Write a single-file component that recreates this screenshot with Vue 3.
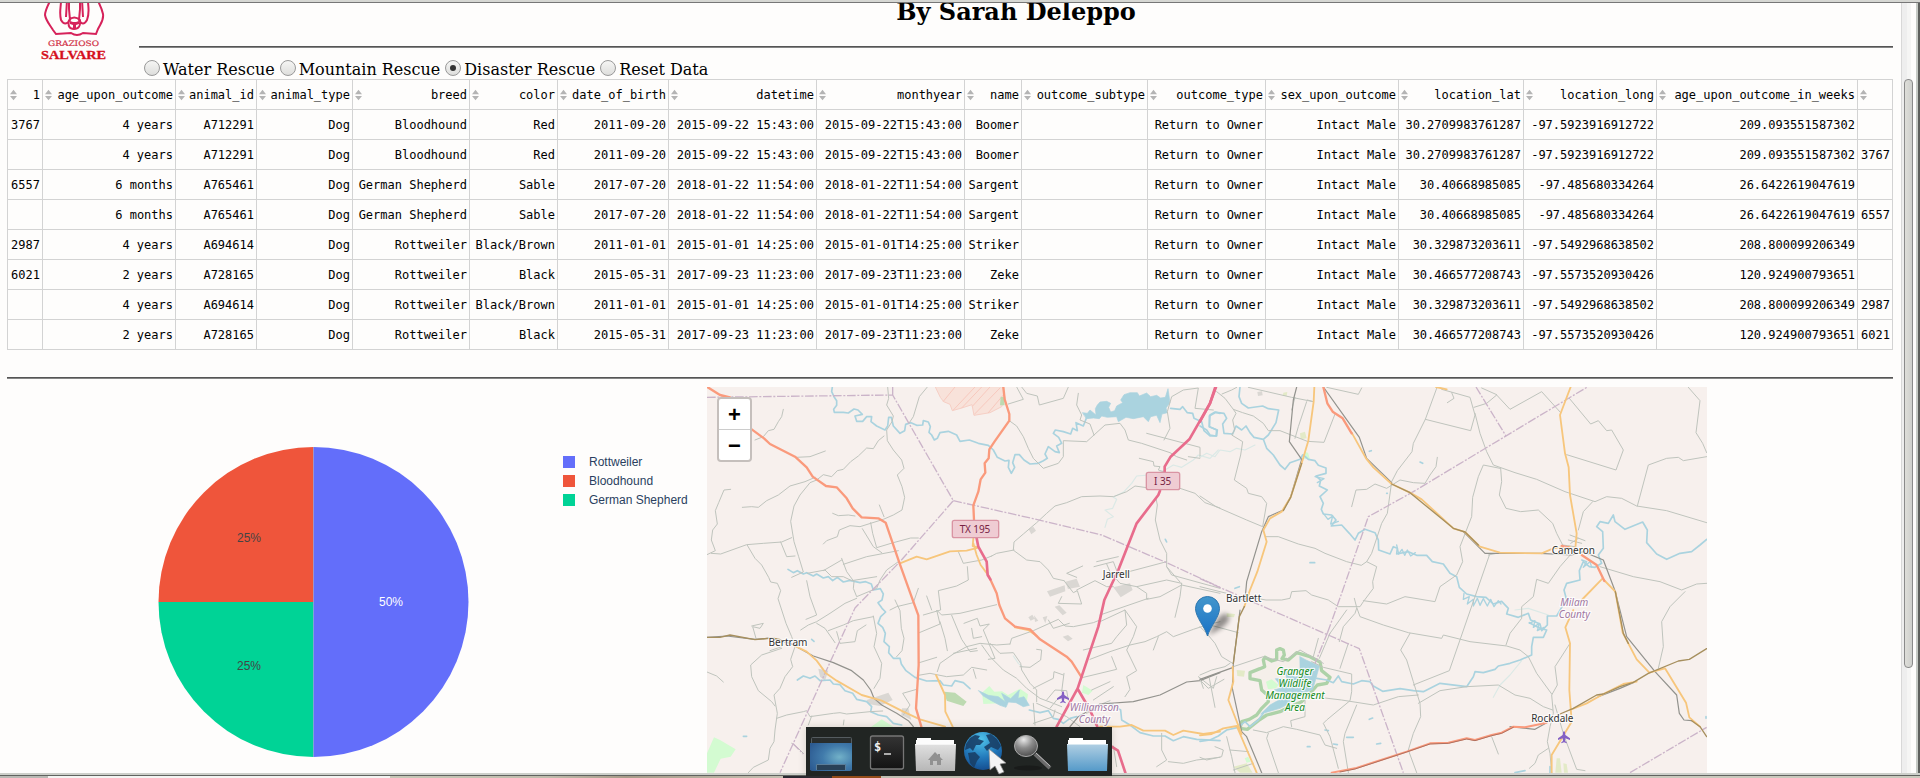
<script setup>
const columns = [
  ['1', 35], ['age_upon_outcome', 133], ['animal_id', 81], ['animal_type', 96], ['breed', 117],
  ['color', 88], ['date_of_birth', 111], ['datetime', 148], ['monthyear', 148], ['name', 57],
  ['outcome_subtype', 126], ['outcome_type', 118], ['sex_upon_outcome', 133], ['location_lat', 125],
  ['location_long', 133], ['age_upon_outcome_in_weeks', 201], ['', 35],
]

const dogs = {
  3767: ['4 years', 'A712291', 'Dog', 'Bloodhound', 'Red', '2011-09-20', '2015-09-22 15:43:00', '2015-09-22T15:43:00', 'Boomer', '', 'Return to Owner', 'Intact Male', '30.2709983761287', '-97.5923916912722', '209.093551587302'],
  6557: ['6 months', 'A765461', 'Dog', 'German Shepherd', 'Sable', '2017-07-20', '2018-01-22 11:54:00', '2018-01-22T11:54:00', 'Sargent', '', 'Return to Owner', 'Intact Male', '30.40668985085', '-97.485680334264', '26.6422619047619'],
  2987: ['4 years', 'A694614', 'Dog', 'Rottweiler', 'Black/Brown', '2011-01-01', '2015-01-01 14:25:00', '2015-01-01T14:25:00', 'Striker', '', 'Return to Owner', 'Intact Male', '30.329873203611', '-97.5492968638502', '208.800099206349'],
  6021: ['2 years', 'A728165', 'Dog', 'Rottweiler', 'Black', '2015-05-31', '2017-09-23 11:23:00', '2017-09-23T11:23:00', 'Zeke', '', 'Return to Owner', 'Intact Male', '30.466577208743', '-97.5573520930426', '120.924900793651'],
}
const first = (id) => [id, ...dogs[id], '']
const last = (id) => ['', ...dogs[id], id]
const rows = [first(3767), last(3767), first(6557), last(6557), first(2987), first(6021), last(2987), last(6021)]

const filters = ['Water Rescue', 'Mountain Rescue', 'Disaster Rescue', 'Reset Data']
const selected = 'Disaster Rescue'

const legend = [
  { name: 'Rottweiler', tone: 'blue' },
  { name: 'Bloodhound', tone: 'red' },
  { name: 'German Shepherd', tone: 'green' },
]

/* Map geometry: three units per pixel, west half and east half. */
const west = [
  ['area-mil', 'M706 21L721 52L731 65L750 73L757 92L785 84L816 74L822 106L870 98L905 80L915 55L908 21Z'],
  ['hatch', 'M730 64L765 21M760 90L825 21M785 84L845 21M818 78L870 21M824 102L900 24M865 98L910 45'],
  ['wood', 'M902 50L912 52L914 76L900 76ZM733 935L765 938L800 965L790 978L740 962Z'],
  ['park', 'M42 1072L60 1080L107 1108L92 1130L62 1136L42 1178H21V1120ZM846 938L868 918L883 935L906 934L924 945L960 926L984 943L978 978L940 962L900 970L850 972ZM512 1042L545 1018L580 1040ZM1150 915L1178 932L1165 945L1146 938Z'],
  ['town', 'M986 448L1000 440L1008 452L994 463ZM1041 634L1094 616L1096 634L1050 650ZM1096 605L1130 596L1140 620L1104 627ZM1240 622L1290 610L1298 630L1262 652ZM1064 680L1078 676L1100 698L1088 706ZM1002 706L1015 722L1005 726ZM985 712L997 704L1004 716L992 722ZM1028 712L1042 708L1036 730ZM1088 770L1104 765L1118 776L1104 784ZM355 866L385 872L375 902L360 890ZM500 960L565 938L578 960L540 978L505 972ZM606 985L625 985L634 1020L604 1005Z'],
  ['lake', 'M1148 98L1162 100L1170 90L1188 105L1186 86L1192 75L1200 66L1220 64L1232 70L1226 82L1232 96L1244 92L1250 78L1268 68L1262 60L1272 44L1290 38L1312 38L1318 48L1340 39L1352 50L1370 46L1382 54L1396 52L1404 26L1410 68L1398 84L1402 98L1386 102L1380 128L1370 106L1352 110L1345 125L1330 110L1300 116L1278 112L1255 125L1250 110L1222 112L1205 108L1198 116L1180 114L1160 116Z'],
  ['lake', 'M836 932L865 946L895 950L916 966L905 940L932 956L958 930L954 955L972 950L988 976L970 980L948 968L925 966L918 982L900 976L874 962L850 948Z'],
  ['stream', 'M1215 442L1222 418L1240 410L1215 390L1238 385L1250 358L1240 352L1272 335L1295 310L1310 288L1360 284L1395 270L1420 255L1445 262L1480 240L1495 225L1530 235L1555 210M940 828L955 850L966 860'],
  ['river', 'M397 21L395 35L402 50L410 62L410 76L401 88L403 97L430 97L445 99L462 87L474 90L487 103L465 108L470 124L488 124L500 110L515 110L513 125L530 138L555 150L563 138L566 112L574 112L580 138L600 160L614 152L617 133L633 128L650 136L668 135L670 122L685 126L691 140L687 157L695 165L703 180L712 175L720 158L745 154L770 165L780 184L808 180L835 190L865 196L880 210L892 232L915 243L927 241L925 262L934 280L944 262L938 248L945 224L958 224L972 240L990 252L1015 250L1030 242L1042 235L1035 222L1045 200L1065 215L1078 218L1070 198L1085 190L1076 172L1060 160L1066 150L1090 155L1112 162L1118 145L1132 152L1128 128L1150 138L1160 112'],
  ['river', 'M1412 85L1440 88L1448 80L1462 98L1478 100L1482 115L1505 125L1512 152L1530 168L1550 168L1552 150L1528 140L1530 105L1545 96L1560 100'],
  ['river', 'M264 568L280 578L292 572L310 582L320 578L340 588L350 582L370 594L385 590L398 602L412 592L430 606L450 601L480 608L497 605L514 612L520 630L541 626L550 642L546 660L534 668L546 685L557 696L542 710L534 730L548 742L556 760L552 785L568 800L566 818L580 835L600 835L604 852L618 872L645 892L680 903L720 902L730 915L755 918L765 902L790 908L810 926'],
  ['river', 'M292 900L310 888L330 895L345 888L360 902L390 900L400 912L420 914L435 932L458 940L470 958L500 965L515 980L512 995L535 1005L560 1010L580 1030L605 1035'],
  ['river', 'M988 990L1020 998L1045 992L1060 1015L1075 1018L1090 1030L1110 1015L1130 1010M1230 970L1262 990L1265 1020L1290 1035L1320 1058L1360 1068L1395 1068L1420 1082L1450 1070L1490 1078L1560 1082M130 1069H140M335 778L342 784M1396 478L1400 486'],
  ['road', 'M682 21L658 50L640 110L628 128M250 88L245 110L235 125L222 148L205 152L190 170L165 180M563 21L566 55L560 75L580 108L576 125L560 150L562 182L580 210L605 240L612 265L592 285L606 320L614 352L606 390L580 405L550 418L480 440L450 437L418 450L412 470L380 482L370 492M552 168L535 182L520 206L500 204L475 228L452 245L430 268L412 272L395 290L370 284L350 300L330 308L300 345L282 378L272 424L282 485L296 530L310 576L275 592'],
  ['road', 'M376 213L330 230L290 232M127 382L155 380L175 382L200 362L235 345L270 318L315 305L345 292M92 328L72 330L56 368L46 392L52 432L38 450L34 480L46 512L21 524M34 520L62 522L140 494L190 490L245 486L275 473M242 486L260 530L285 528M142 496L165 535L185 555L206 592L212 606L232 610L242 632L234 656L258 730L275 770L285 800L272 838L278 860L255 890L240 925L222 945L232 1000L225 1050L222 1085L210 1105L205 1140L160 1162L145 1178'],
  ['road', 'M398 400L415 407L445 405L465 408M538 375L552 410M512 428L518 460L530 503L580 488L632 474L655 474M487 446L520 500L545 518M430 553L500 530L595 512M425 535L440 575L462 605L460 625L470 650L530 625L540 600L560 570L595 545M370 572L425 540M320 602L330 650L350 705L318 718M322 580L375 570L395 590L430 590L455 602L530 590'],
  ['road', 'M302 750L325 735L350 725L390 700L435 670L470 655M350 730L375 745L405 788M385 752L430 735L460 722L520 710M410 755L420 790L465 785L472 752L498 735M520 708L530 760L522 800L545 850L540 895L522 925M570 690L590 680L640 668L655 625M585 660L600 692L604 745L612 775L606 812L590 830M155 738L190 730L180 745L158 740L168 775M210 812L245 800M245 805L185 825L152 855L155 890L175 932L215 965L225 978'],
  ['road', 'M230 1015L260 1005L310 995L320 992L330 1010L400 1000L420 998L440 1002L510 995L548 993M325 1035L335 1008M21 876L50 888L70 906M430 1035L432 1020M610 1005L630 975L608 940L650 928M275 1090L290 1100L310 1120M655 886L690 880L740 890L790 885L815 862L860 870M658 848L710 832M820 868L828 895M712 875L720 850L760 822L800 800L840 790L890 795L930 792'],
  ['road', 'M775 515L790 550L845 540L875 528M802 560L805 600L770 618L715 632L722 690L670 705M680 648L695 690M658 758L720 732L710 690L725 705L780 700L890 674M755 706L785 778L810 815L832 812M720 725L735 775L742 812M792 730L832 715L840 738L868 732L850 750L885 835L865 838M815 745L820 775L845 770M875 528L890 520L942 510M940 510L942 486L970 462L1010 428L1040 400L1065 378L1100 368L1145 350L1200 348L1240 350L1280 335L1305 318L1340 323'],
  ['road', 'M942 512L980 540L1020 545L1045 570L1060 595L1092 602M1092 602L1120 638L1132 632L1145 672L1075 670L1085 650M1130 630L1185 602L1220 620L1240 620M1148 558L1100 580L1130 592M1190 545L1255 530M1220 552L1230 575L1260 610L1310 620L1400 600L1445 610M1310 620L1340 640L1340 658L1380 650L1445 615L1560 640M1230 590L1400 545M1182 560L1240 545L1255 585'],
  ['road', 'M1440 606L1400 560V520L1380 480L1366 420L1372 375L1368 355M1440 325L1485 340L1515 368L1560 384M925 72L970 58L950 21M965 21L980 40L1012 48L1018 75L1090 55L1105 21M925 120L950 138L970 170L985 205L1000 235L1030 265L1075 250L1090 230L1090 182L1160 185L1215 135L1260 130L1275 150L1285 180L1325 190L1410 218L1430 230L1460 240M1135 40L1130 75L1145 105L1140 120L1170 132L1182 165'],
  ['road', 'M1340 160L1500 202L1500 235L1465 230M1392 180L1410 145L1402 95L1415 50L1450 30L1495 24L1485 85L1540 90M1318 235L1360 245L1362 258L1380 260L1375 270L1400 278M1400 560L1415 585L1560 625M1445 610L1440 650L1425 712M870 790L900 820L940 818L962 850L965 870L990 910L1010 930L1010 965M960 860L990 862L1022 840L1025 810L1010 808M760 820L830 805M930 792L935 775L1000 752L1075 718L1095 738L1120 740L1180 728L1200 720'],
  ['road', 'M1045 720L1060 745L1108 730M1200 725L1275 690L1280 735L1250 770L1235 790L1150 810M1200 705L1345 655M1170 838L1230 815L1290 795L1335 785L1370 770L1400 755L1420 770L1480 748L1520 735L1560 725M1275 690L1310 740L1300 770L1280 810L1310 872L1280 890L1290 928L1275 950M1150 892L1250 868L1235 830M1360 810L1375 770M1175 930L1230 905M1240 920L1180 960'],
  ['road', 'M845 795L870 830L910 870L950 895L980 925L1020 955L1060 970L1085 980M1000 925L1060 895L1062 875L1090 885M1085 935L1092 880M1040 960L1065 930L1100 932L1105 960M1000 970L1005 1035M1065 990L1060 1010L1000 1030M1010 970L1100 1010L1140 1040M1160 1000L1210 970L1230 962M1070 960L1050 985M1500 895L1510 925M1385 1060V1110L1400 1140L1370 1160M1405 1145L1450 1150L1490 1140L1560 1132M1240 1098L1250 1160M1495 890L1540 925L1550 890'],
  ['boundary', 'M21 52L578 45L760 362L600 545L465 684L375 880L240 1178M578 45V21M760 362L1000 416L1205 465L1400 548L1560 622M278 1090L310 1122'],
  ['rail', 'M21 772L80 768L165 778L215 774L270 790L340 828L400 848L455 872L490 900L512 930L522 955L545 975L590 1000L625 1022L640 1040M1110 1040L1135 1010L1200 972L1300 965L1380 945L1460 906L1500 902L1560 878'],
  ['yellow', 'M600 550L650 530L680 538L750 514L800 512L835 503L818 498L820 475M820 490L830 525L842 555L868 590M285 798L320 815L350 842L378 880L410 902L485 945L545 962L610 995L660 1018L735 1040M708 885L735 945L736 995L758 1040M945 742L985 750L1010 768M1200 1040L1260 1040L1295 1035L1330 1052L1395 1052L1420 1065L1450 1052L1510 1062L1560 1055'],
  ['ochre', 'M21 772L60 772L90 765L165 779L215 774L245 780'],
  ['trunk', 'M22 21L60 45L90 52M148 143L192 175L210 192L285 230L320 262L338 290L378 318L410 322L440 355L458 385L485 412L535 415L557 428L598 548L640 665L655 706L656 855L648 985L664 1040M910 21L914 58L928 102V122L884 184L868 208L866 235L854 250L856 278L842 298L835 335L820 376L822 420M870 596L890 640L898 675L915 715L945 740L990 748L1020 778L1100 830L1115 845L1145 892'],
  ['motor', 'M830 475L835 500L860 545L863 585L871 598M1546 21L1530 70L1468 178L1412 230L1394 260V285M1380 332L1375 345L1310 430L1255 570L1213 660L1195 740L1133 925L1070 1040M1135 930L1170 990L1192 1040M1235 1100L1254 1112L1276 1178'],
]

const east = [
  ['pale', 'M250 38L262 36L260 48L248 48ZM300 160L315 155L320 175L302 178ZM110 870L135 872L132 890L112 888ZM80 700L105 702L102 712L80 710ZM1070 1135H1080L1085 1178H1066ZM1090 1150L1100 1152L1104 1178H1092ZM100 1160L140 1150L158 1178H120Z'],
  ['park', 'M312 215L324 218L330 238L312 236ZM134 1135L145 1130L152 1145L140 1148Z'],
  ['town', 'M172 36L186 34L188 46L174 48Z'],
  ['reserve', 'M230 810L240 806L250 810L253 825L246 836L265 840L290 818L330 830L360 846L365 872L390 892L380 910L352 915L330 940L305 965L270 980L240 995L200 1005L175 1022L142 1048L120 1045L125 1025L148 1018L170 1005L185 985L205 965L202 945L185 930L180 902L150 896L150 878L180 866L194 860L190 840L195 832L215 843L230 838Z'],
  ['park', 'M198 905L215 898L235 915L228 925L204 928Z'],
  ['lake', 'M300 830L318 840L340 850L358 858L348 895L338 928L315 938L295 955L270 970L240 985L205 995L182 1002L210 975L240 958L260 940L235 935L222 930L240 925L235 908L226 896L245 896L262 905L258 885L240 858L262 872L285 892L300 885Z'],
  ['stream', 'M0 232L20 220L45 230L60 210L90 215L110 205L135 210L165 195M880 952L900 915L930 885L965 842M945 690L985 685L1045 705'],
  ['river', 'M0 138L20 150L30 165L48 168L50 150L28 140L28 108L48 97L72 100L80 115L68 132L72 160L98 162L108 138L125 150L138 138L150 158L162 172L190 178L205 165L228 128L236 90L205 86L188 78L145 84L125 70L117 50L120 21M190 178L200 205L220 225L240 255L255 268L270 248L300 238L308 225'],
  ['river', 'M310 225L325 238L345 242L355 256L378 264V280L348 288L362 300L358 318L382 330L360 350L370 370L364 388L370 402L395 405L408 420L394 438L425 435L448 460L465 480L475 460L495 448L525 458L535 480L536 510L570 522L580 500L592 505L590 522L625 515L650 526L680 526L697 545L730 552L750 580L770 590L778 622L800 642L830 650L858 652L880 672L905 664L925 685L920 702L955 712L985 700L992 720L1020 732L1025 752L1042 735L1042 708L1070 708L1085 682L1100 660L1092 630L1100 610L1140 600L1138 572L1150 545L1168 560L1185 562L1205 550L1195 525L1210 505L1208 455L1190 440L1200 425L1225 430L1240 405L1245 425L1275 448L1328 426L1342 450L1340 488L1370 522L1400 538L1440 520L1475 515L1500 495L1520 478'],
  ['river', 'M350 895L380 900L400 908L415 888L425 905L460 912L485 902L510 905L520 918L548 934L600 926L640 932L670 935L720 910L800 920L820 890L825 875L850 878L885 868L895 858L930 850L960 840L995 825V800L1000 772L1030 772L1040 750L1020 745L988 728'],
  ['meander', 'M792 640L790 658L808 650L802 672L820 658L820 678L832 655L840 676L850 656L862 678L872 658L882 680L895 662L903 672M590 495L596 522L606 508L614 526L622 510L632 528L646 518M1145 540L1160 545L1150 562L1170 545L1175 562M345 290L372 296L352 308M370 400L384 418L398 408L392 432L415 424M988 730L1005 722L1000 742L1018 730L1012 752L1032 742'],
  ['river', 'M0 1084L30 1080L55 1068L80 1050L115 1042L135 1025L150 1040L175 1020L190 1000M330 548H344M660 246L668 250M508 214L514 212M105 625L118 620M375 1050L385 1052M400 1092L412 1094M440 1072H460M508 1018L518 1014M530 1092L542 1090M322 1100H330M945 1178L975 1172M1050 1160V1178M560 340H562M1518 1010V1015'],
  ['road', 'M50 35L75 55L100 88L128 98L160 108L190 130L205 152L240 152L322 184L372 187L405 102M66 42L95 30L110 22M145 22L275 52L340 65L322 60M380 22L475 43L485 24M285 52L275 90M320 65L295 140L285 175M100 88L108 100L98 120L104 150L95 165L128 185L122 225L103 300L140 325L145 340L185 350L200 370L188 440L140 420L48 380L0 348'],
  ['road', 'M725 28L810 52L825 105L812 152L676 118M710 25L676 118L640 190L636 215L592 272L575 305L562 400L545 430L515 520L500 545L484 556L440 545L375 520L345 505L295 492L235 470L198 470M500 545L530 560L518 605L520 625L490 665L480 680L415 680L385 660L335 645L318 632L275 635L270 655L245 660L198 660L140 650'],
  ['road', 'M755 38L762 55L742 68M822 82L860 70L890 45L930 88L1025 35L1082 98M845 24L890 44M825 100L840 160L860 215L880 255L945 278L1010 298L1095 335L1185 365L1220 350L1265 355L1310 378L1400 392L1520 428M1108 55L1172 132L1195 122L1220 152L1235 150L1270 210L1248 270L1100 224M1465 22L1500 62L1488 158L1508 190L1520 218M1312 378L1345 255L1400 235L1435 232L1450 242L1520 230'],
  ['road', 'M712 232L708 260L690 285L675 310L640 308L600 300L560 325L525 312L500 328L468 330L455 380M900 265L850 255L835 290L818 352L815 410L780 500L788 545L770 585L720 620L705 665L615 650L560 672L490 662M870 520L748 872L640 915M902 265L905 305L898 345L918 385L962 395L1015 390L1058 430L1070 460L1088 495L1125 500M890 520L865 525'],
  ['road', 'M1178 365L1150 395L1135 450M1110 465L1155 482M1105 480L1145 490M1112 490L1135 475M1115 520L1080 560L1045 610L1010 598L1000 650L965 680V715L930 760L918 795M1200 560L1300 590L1380 605L1445 630L1490 612L1520 610M1455 635L1410 680L1385 725L1390 800L1375 865M463 655L470 682L480 710L550 735L625 758L725 775L730 765L810 785L920 798L960 810L985 830L1010 880L1055 942'],
  ['road', 'M470 685L465 700L430 740L418 785M630 760L602 810L620 840L640 905L660 970L662 1010L640 1060L625 1110L650 1178M655 970L720 932L800 920L895 915L945 945L990 955L1030 980L1058 990M355 775L340 830M390 760L358 835M445 790L420 865M0 740L20 760L45 790L65 830L98 850M0 620L80 640L140 665M30 735L115 758'],
  ['road', 'M440 690L390 760M375 954L425 960L520 975L595 950L655 945M335 845L370 862L455 882V935L450 962L380 1020L370 1030L390 1070L415 1165M470 975L435 1060L430 1085L445 1178M160 1050L200 1058L250 1040L290 1048L360 1065L375 1095L410 1105M205 1060L200 1075L235 1178M315 960V1010L272 1022L275 1040M100 860L190 830L250 845L300 810L370 850'],
  ['road', 'M0 885L35 870L75 860L90 850M28 895L45 982M0 900L25 925L72 898M0 1132L20 1140L65 1130L70 1110L45 1100M80 1070L95 1130L105 1178M90 1110L145 1115M100 1170L160 1150M1110 790L1065 860L1072 915L1055 945L1060 1000L1050 1040L1042 1085L1050 1120L1055 1178M1045 1105L1015 1125L1005 1150L988 1165M875 1070L895 1122M1095 1075L1130 1168L1155 1172M1065 975L1090 1060'],
  ['boundary', 'M0 596L145 660L478 806L610 1178M383 757L425 640L505 410L640 335L1162 21M828 21L918 168M383 757L345 850M1290 1178L1520 1042'],
  ['rail', 'M290 21L280 60L268 185L305 238M305 238L272 350L250 390L205 410L185 455L140 605L135 660M370 21L478 172L500 235L575 308M790 455L855 520H1020L1115 525L1150 515L1210 540L1245 632M1245 632L1280 770L1365 875L1430 945L1438 1000L1452 1020L1475 1022M120 690L100 850L97 925L125 1055L140 1070L185 1178M100 862L0 898M930 1040L1005 1048L1040 1028M1195 950L1260 925L1300 908'],
  ['yellow', 'M343 21L341 65L325 182L305 250L272 352L245 395L210 415L190 450L200 485L172 575L150 630L133 680M455 158L498 235L520 262L575 312L630 338L665 358L760 445L795 456L840 500L900 518L1025 520L1060 505L1110 500M1112 21L1080 105L1095 220L1106 262L1110 345L1130 460L1126 505M1208 595L1145 660M1212 600L1246 635L1268 758L1310 838L1348 878L1395 865L1458 968L1468 1012L1500 1040M1120 690L1096 742L1110 790L1108 930L1115 1025L1055 1125V1178M0 1066L35 1062L70 1045L110 1038L170 1178M125 1062L85 960L100 905L98 860M708 21L740 28M1110 990L1160 970L1210 942L1270 912L1310 905'],
  ['ochre', 'M305 250L272 352L250 392M575 312L630 338L760 445L795 456L835 495M118 710L100 850M133 680L118 710M1080 1002L1120 985L1190 945L1210 942L1260 920L1300 907L1345 880L1435 843L1468 838L1520 806M1246 635L1270 760L1285 790M1475 1022L1500 1040L1520 1070'],
  ['trunk', 'M370 21L382 70L398 95L428 115L455 160M1085 498L1105 502M1145 525L1190 555L1213 603'],
  ['trunk thin', 'M395 1178L465 1165L620 1115L690 1090L745 1088L800 1075L825 1080L875 1065L905 1058L940 1040L975 1042L1040 1028'],
  ['scar', 'M420 1176L465 1167L620 1116L690 1092L745 1090L800 1077L825 1082L875 1067L905 1060L940 1042'],
  ['motor', 'M48 21L30 70L0 125'],
]

const places = [
  ['town-name', 1249, 594, 'Jarrell'], ['town-name', 264, 797, 'Bertram'], ['town-name', 1631, 666, 'Bartlett'],
  ['town-name', 2620, 521, 'Cameron'], ['town-name', 2557, 1025, 'Rockdale'],
  ['county', 1183, 993, 'Williamson'], ['county', 1183, 1029, 'County'],
  ['county', 2623, 678, 'Milam'], ['county', 2623, 714, 'County'],
  ['nature', 1785, 886, 'Granger'], ['nature', 1785, 922, 'Wildlife'], ['nature', 1785, 958, 'Management'], ['nature', 1785, 994, 'Area'],
]
const planes = [[1089, 951], [2592, 1071]]
</script>

<template>
  <div class="window">
    <div class="top-edge"></div>
    <div class="body">
      <main class="page">
        <header class="head">
          <svg class="logo" width="66" height="60" viewBox="0 0 66 60">
            <g class="logo-line">
              <path d="M6 0C3 6 1 10 1 14C2 20 6 24 9 29L12 33L27 32Q33 36 39 32L52 33L54 28C57 22 60 19 59 13C58 8 56 4 54 0" transform="translate(3 1)" />
              <path d="M20 0C20 8 18 12 20 20Q24 27 29 20L28 9V0M47 0C47 8 49 12 46 20Q42 27 38 20L39 9V0M26 0L25 17M41 0L42 17M28 20Q26 29 33 29Q40 29 39 20Q33 15 28 20" />
            </g>
            <path class="nose" d="M29 21L32 22H35L38 21V24L35 25V28H32V25L29 24Z" />
            <text class="brand-top" x="7" y="46" textLength="51" lengthAdjust="spacingAndGlyphs">GRAZIOSO</text>
            <text class="brand-main" x="0" y="58.500" textLength="65" lengthAdjust="spacingAndGlyphs">SALVARE</text>
          </svg>
          <div class="heading">
            <h2>By Sarah Deleppo</h2>
            <div class="rule"></div>
            <div class="filters">
              <label v-for="f in filters" :key="f"><i class="radio" :class="{ on: f === selected }"></i>{{ f }}</label>
            </div>
          </div>
        </header>

        <table>
          <colgroup><col v-for="(c, i) in columns" :key="i" :style="{ width: c[1] + 'px' }"></colgroup>
          <thead>
            <tr>
              <th v-for="(c, i) in columns" :key="i">
                <div class="th"><svg width="7" height="12" viewBox="0 0 8 12"><path d="M4 0L8 5H0ZM0 7H8L4 12Z" /></svg><span>{{ c[0] }}</span></div>
              </th>
            </tr>
          </thead>
          <tbody>
            <tr v-for="(r, i) in rows" :key="i"><td v-for="(v, j) in r" :key="j">{{ v }}</td></tr>
          </tbody>
        </table>
        <div class="rule lower"></div>

        <div class="panels">
          <section class="chart">
            <svg width="700" height="386" viewBox="7 387 700 386">
              <path class="blue" d="M313.5 602V447A155 155 0 0 1 313.5 757Z" />
              <path class="red" d="M313.5 602H158.5A155 155 0 0 1 313.5 447Z" />
              <path class="green" d="M313.5 602V757A155 155 0 0 1 158.5 602Z" />
              <path class="seam" d="M313.5 447V757" />
              <g class="pct">
                <text class="light" x="391" y="606">50%</text>
                <text x="249" y="542">25%</text>
                <text x="249" y="670">25%</text>
              </g>
            </svg>
            <ul class="legend">
              <li v-for="l in legend" :key="l.name"><i :class="l.tone"></i>{{ l.name }}</li>
            </ul>
          </section>

          <section class="map">
            <svg width="1000" height="386" viewBox="21 21 3000 1158">
              <g class="geo"><path v-for="(p, i) in west" :key="i" :class="p[0]" :d="p[1]" /></g>
              <g class="geo" transform="translate(1500 0)"><path v-for="(p, i) in east" :key="i" :class="p[0]" :d="p[1]" /></g>
              <g class="shield">
                <rect x="757" y="421" width="139" height="52" rx="6" /><text x="825" y="458" textLength="92">TX 195</text>
                <rect x="1339" y="277" width="100" height="52" rx="6" /><text x="1388" y="315" textLength="52">I 35</text>
              </g>
              <path v-for="(p, i) in planes" :key="i" class="plane" :transform="`translate(${p[0]} ${p[1]})`" d="M0 -18Q4 -16 4 -6L18 4V9L4 4L3 12L8 16V19L0 16L-8 19V16L-3 12L-4 4L-18 9V4L-4 -6Q-4 -16 0 -18Z" />
              <text v-for="(p, i) in places" :key="i" :class="p[0]" :x="p[1]" :y="p[2]">{{ p[3] }}</text>
            </svg>
            <svg class="pin" width="50" height="42" viewBox="0 0 50 42">
              <defs>
                <linearGradient id="pinFill" x1="0" y1="0" x2="0" y2="1"><stop offset="0" stop-color="#4296cc" /><stop offset="1" stop-color="#1a72c6" /></linearGradient>
                <filter id="soft" x="-30%" y="-30%" width="160%" height="160%"><feGaussianBlur stdDeviation="2.4" /></filter>
              </defs>
              <path d="M13 39L22 24Q29 14 34 20Q36 29 13 39Z" fill="#000" opacity=".42" filter="url(#soft)" />
              <path d="M12.5 40C10 31 .5 21 .5 12.500A12 12 0 0 1 24.500 12.500C24.500 21 15 31 12.500 40Z" fill="url(#pinFill)" stroke="#2f77ae" />
              <circle cx="12.500" cy="12.500" r="4.300" fill="#fff" />
            </svg>
            <div class="zoom"><span>+</span><span>−</span></div>
          </section>
        </div>
      </main>
      <div class="scroll"><div class="thumb"></div></div>
      <div class="right-edge"></div>
    </div>
    <div class="bottom-edge"></div>
    <div class="behind"><i class="b1"></i><i class="b2"></i><i class="b3"></i><i class="b4"></i><i class="b5"></i><i class="b6"></i></div>

    <svg class="dock" width="306" height="49" viewBox="0 0 306 49">
      <defs>
        <radialGradient id="desk" cx=".7" cy=".5" r=".8"><stop offset="0" stop-color="#72b1c8" /><stop offset=".5" stop-color="#417bab" /><stop offset="1" stop-color="#2c5a91" /></radialGradient>
        <linearGradient id="term" x1="0" y1="0" x2="0" y2="1"><stop offset="0" stop-color="#343434" /><stop offset="1" stop-color="#131313" /></linearGradient>
        <linearGradient id="grey" x1="0" y1="0" x2="0" y2="1"><stop offset="0" stop-color="#e0e0e0" /><stop offset="1" stop-color="#b7b7b7" /></linearGradient>
        <linearGradient id="sky" x1="0" y1="0" x2="0" y2="1"><stop offset="0" stop-color="#b0cfe3" /><stop offset="1" stop-color="#559ac9" /></linearGradient>
        <radialGradient id="globe" cx=".45" cy=".2" r=".8"><stop offset="0" stop-color="#4fc3ea" /><stop offset=".6" stop-color="#2279bb" /><stop offset="1" stop-color="#154f91" /></radialGradient>
        <radialGradient id="lens" cx=".4" cy=".2" r=".8"><stop offset="0" stop-color="#e8e8e8" /><stop offset=".5" stop-color="#8b8b8b" /><stop offset="1" stop-color="#505050" /></radialGradient>
      </defs>
      <rect width="306" height="49" fill="#212523" />
      <rect x="5.500" y="10.500" width="40" height="33" rx="1" fill="#292d2d" stroke="#555c60" />
      <path d="M4 16H46V43L44 44H6L4 43Z" fill="url(#desk)" />
      <path d="M10.500 43V37.500H39.500V43" fill="#294157" stroke="#5b7d98" />
      <rect x="64.500" y="9" width="33" height="33" rx="2" fill="url(#term)" stroke="#767676" stroke-width="1.300" />
      <text x="68" y="24" class="prompt">$</text><path d="M78 27H85" stroke="#ddd" stroke-width="1.500" />
      <path d="M110 17V13H111V11H125V13H148V18Z" fill="#fcfcfc" /><path d="M109 17H150L149 44H110Z" fill="url(#grey)" /><path d="M109 17.500H150" stroke="#f4f4f4" />
      <path d="M122 33L129 25L132 28V27H134V30L137 33H135V38H131V34H127V38H124V33Z" fill="#919191" />
      <circle cx="177" cy="24" r="19" fill="url(#globe)" />
      <path d="M160 17L164 11L169 8L174 9L172 12L178 14L174 18L170 18L167 24L164 21L159 23ZM180 8L185 7L191 12L195 19L192 23L185 20L181 24L178 20L184 16ZM162 26L169 25L174 30L171 34L168 41L164 36Z" fill="#183f67" opacity=".9" />
      <path d="M183 22L184 43L189 39L193 47L198 45L194 37L200 36Z" fill="#f5f5f5" stroke="#888" stroke-width=".7" />
      <ellipse cx="222" cy="41" rx="14" ry="2.500" fill="#191b1a" />
      <path d="M229 27L244 41" stroke="#6b6b6b" stroke-width="4" /><path d="M230 26L244 39" stroke="#bbb" stroke-width="1" />
      <ellipse cx="220" cy="19" rx="11.500" ry="10.500" fill="url(#lens)" stroke="#aaa" />
      <path d="M262 17V13H263V11H277V13H300V18Z" fill="#fff" /><path d="M261 17H302L301 44H262Z" fill="url(#sky)" /><path d="M261 17.500H302" stroke="#d8e8f1" />
    </svg>
  </div>
</template>

<style>
body { overflow: hidden; background: #fefdfc; }
</style>

<style scoped>
.window { position: relative; width: 1920px; height: 778px; display: flex; flex-direction: column; overflow: hidden; background: #fefdfc; font-family: "DejaVu Serif", serif; color: #000; }
.top-edge { flex: none; height: 3px; box-sizing: border-box; background: #d6d7d3; border-bottom: 1px solid #777; }
.body { display: flex; height: 770px; flex: none; }
.page { width: 1901px; padding: 0 8px 0 7px; box-sizing: border-box; overflow: hidden; }
.head { display: flex; height: 76px; }
.logo { margin: -3px 32px 0 34px; flex: none; }
.logo-line { fill: none; stroke: #d6225a; stroke-width: 2; }
.nose { fill: #d6225a; }
.brand-top { font: 7.500px "DejaVu Serif", serif; fill: #d23348; stroke: #d23348; stroke-width: .2; }
.brand-main { font: bold 11.500px "Liberation Serif", serif; fill: #d5101c; stroke: #d5101c; stroke-width: .3; }
.heading { width: 1754px; }
h2 { margin: -7px 0 0; height: 50px; font-size: 24px; line-height: 32px; text-align: center; }
.rule { height: 1px; border-top: 1px solid #555; background: #858585; }
.lower { margin-top: 27px; width: 1886px; }
.filters { display: flex; gap: 4px; padding: 10px 0 0 4px; font-size: 16px; line-height: 24px; white-space: nowrap; }
.filters label { display: flex; align-items: center; }
.radio { width: 14px; height: 14px; margin: -5px 3px 0 1px; border: 1px solid #999; border-radius: 50%; background: linear-gradient(#f5f5f4, #dededc); display: flex; align-items: center; justify-content: center; }
.radio.on::after { content: ""; width: 6px; height: 6px; border-radius: 50%; background: #333; }
table { width: 1886px; table-layout: fixed; border-collapse: collapse; font: 12px "DejaVu Sans Mono", monospace; }
th, td { box-sizing: border-box; height: 30px; padding: 2px 2px 0 0; border: 1px solid #d3d3d3; text-align: right; font-weight: normal; white-space: nowrap; line-height: 15px; }
.th { display: flex; justify-content: space-between; align-items: center; padding-left: 2px; }
.th svg { flex: none; fill: #b4b4b4; margin-top: -2px; }
.panels { display: flex; margin-top: 8px; }
.chart { position: relative; width: 700px; height: 386px; }
.chart > svg, .map > svg { display: block; }
.blue { fill: #636efa; background: #636efa; }
.red { fill: #ef553b; background: #ef553b; }
.green { fill: #00d396; background: #00d396; }
.seam { stroke: #8e9bd8; stroke-width: .7; }
.pct { font: 12px "Liberation Sans", Arial, sans-serif; fill: #444; text-anchor: middle; }
.pct .light { fill: #fff; }
.legend { position: absolute; left: 556px; top: 66px; margin: 0; padding: 0; list-style: none; font: 12px/19px "Liberation Sans", Arial, sans-serif; color: #2a3f5f; }
.legend li { display: flex; align-items: center; gap: 14px; height: 19px; }
.legend i { width: 12px; height: 12px; margin-top: -1px; }
.map { position: relative; width: 1000px; height: 386px; overflow: hidden; background: #f7f0ed; }
.geo path { fill: none; stroke-linejoin: round; stroke-linecap: round; }
.geo .road { stroke: #bfc4bd; stroke-width: 3; }
.geo .rail { stroke: #92928d; stroke-width: 3.600; }
.geo .river { stroke: #aad3df; stroke-width: 5; }
.geo .meander { stroke: #aad3df; stroke-width: 4; }
.geo .stream { stroke: #dbe9e6; stroke-width: 3.500; }
.geo .yellow { stroke: #f7c67c; stroke-width: 5.500; }
.geo .ochre { stroke: #a68f5e; stroke-width: 4; }
.geo .trunk { stroke: #fa9a7c; stroke-width: 7; }
.geo .thin { stroke-width: 6; }
.geo .scar { stroke: #b0705f; stroke-width: 3; }
.geo .motor { stroke: #e86c8c; stroke-width: 8; }
.geo .boundary { stroke: #cbb4c9; stroke-width: 4; stroke-linecap: butt; stroke-dasharray: 26 5 6 5; }
.geo .lake { fill: #aad3df; stroke: #aad3df; stroke-width: 2; }
.geo .park { fill: #d3fbd1; }
.geo .pale { fill: #e3eac7; }
.geo .wood { fill: #bddab1; }
.geo .town { fill: #dad7d3; }
.geo .area-mil { fill: #f8e2da; stroke: #f6cfc5; stroke-width: 3; }
.geo .hatch { stroke: #f7c8bd; stroke-width: 3; }
.geo .reserve { fill: #f5efea; stroke: #add2a8; stroke-width: 10; }
.shield rect { fill: #efccd3; stroke: #d994a3; stroke-width: 4; }
.shield text { font: 30px "Noto Sans", sans-serif; fill: #772344; text-anchor: middle; }
.plane { fill: #8461c4; }
.town-name, .county, .nature { font: 30px "Noto Sans", sans-serif; text-anchor: middle; fill: #333; stroke: rgba(255, 255, 255, .8); stroke-width: 7px; paint-order: stroke; stroke-linejoin: round; }
.county { font-style: italic; fill: #a078a2; }
.nature { font-style: italic; fill: #158c22; }
.map .pin { position: absolute; left: 488px; top: 209px; }
.zoom { position: absolute; left: 10px; top: 10px; width: 31px; border: 2px solid #c5bfbc; border-radius: 4px; background: #fff; font: bold 22px/32px "Liberation Sans", Arial, sans-serif; text-align: center; }
.zoom span { display: block; height: 30px; }
.zoom span + span { border-top: 1px solid #ccc; }
.scroll { box-sizing: border-box; width: 15px; border-left: 1px solid #d8d8d8; padding: 76px 3px 0 2px; background: linear-gradient(90deg, #eee 0 5px, #f5f5f4 5px 9px, #fefdfc 9px); }
.thumb { box-sizing: border-box; width: 9px; height: 589px; border: 1px solid #8a8a8a; border-radius: 4px; background: linear-gradient(90deg, #deded9, #cecfcc); }
.right-edge { box-sizing: border-box; width: 4px; background: #c6cac5; border-right: 2px solid #5e605d; }
.bottom-edge { flex: none; box-sizing: border-box; height: 3px; background: #cdcfca; border-bottom: 1px solid #60635f; }
.behind { display: flex; height: 2px; }
.b1 { width: 48px; background: #b9b9b4; }
.b2 { width: 342px; background: #f4f4f2; }
.b3 { width: 393px; background: linear-gradient(90deg, #c8c8b8, #c1bcad 40%, #a99b89 60%, #c5c0b2); }
.b4 { width: 49px; background: #2a2931; }
.b5 { width: 49px; background: #9a4c18; }
.b6 { flex: 1; background: #cac9bd; }
.dock { position: absolute; left: 806px; top: 727px; box-shadow: 0 0 8px rgba(80, 80, 50, .2); }
.prompt { font: bold 12px "DejaVu Sans Mono", monospace; fill: #f3f3f3; }
</style>
